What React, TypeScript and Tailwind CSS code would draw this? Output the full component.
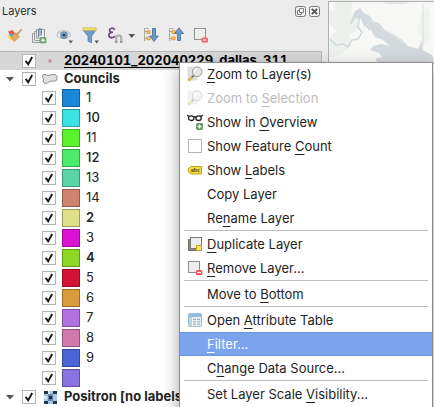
import React from "react";

type Legend = { label: string; fill: string; edge: string; weight?: string };

const councils: Legend[] = [
  { label: "1", fill: "bg-[#1b87d9]", edge: "border-[#145f98]" },
  { label: "10", fill: "bg-[#3be2e5]", edge: "border-[#2b9ea0]", weight: "font-medium" },
  { label: "11", fill: "bg-[#5bf32d]", edge: "border-[#40aa20]" },
  { label: "12", fill: "bg-[#4ceb6b]", edge: "border-[#35a44b]", weight: "font-medium" },
  { label: "13", fill: "bg-[#5bd4a8]", edge: "border-[#409476]" },
  { label: "14", fill: "bg-[#cf826e]", edge: "border-[#915b4d]" },
  { label: "2", fill: "bg-[#dfdf87]", edge: "border-[#9c9c5e]", weight: "font-semibold" },
  { label: "3", fill: "bg-[#d912d4]", edge: "border-[#980d94]" },
  { label: "4", fill: "bg-[#8dd824]", edge: "border-[#639719]", weight: "font-semibold" },
  { label: "5", fill: "bg-[#d31335]", edge: "border-[#940d25]" },
  { label: "6", fill: "bg-[#da9c3b]", edge: "border-[#996d29]" },
  { label: "7", fill: "bg-[#b370df]", edge: "border-[#7d4e9c]" },
  { label: "8", fill: "bg-[#d278ac]", edge: "border-[#935478]" },
  { label: "9", fill: "bg-[#4965d5]", edge: "border-[#334795]" },
  { label: "", fill: "bg-[#8a72e2]", edge: "border-[#61509e]" },
];

function Check({ label }: { label: string }) {
  return (
    <span className="grid size-3.5 shrink-0">
      <input
        type="checkbox"
        defaultChecked
        aria-label={label}
        className="peer col-start-1 row-start-1 size-3.5 appearance-none border border-[#b4b4b4] bg-white"
      />
      <svg viewBox="0 0 14 14" className="pointer-events-none invisible col-start-1 row-start-1 size-3.5 peer-checked:visible">
        <path d="M3.6 6.8 6.2 10.2 10.2 3" fill="none" stroke="#1c1c1c" strokeWidth="1.9" />
      </svg>
    </span>
  );
}

function Triangle() {
  return (
    <svg viewBox="0 0 8 5" className="h-[5px] w-2 shrink-0">
      <path d="M0 0H8L4 4.6Z" fill="#555" />
    </svg>
  );
}

function Magnifier() {
  return (
    <svg viewBox="0 0 16 16" className="size-4">
      <path d="M1 1h9v13H1z" fill="#e4e4df" stroke="#d0d0cc" strokeWidth=".6" />
      <path d="M6.8 9.2 1.6 14.8" stroke="#7d7d7d" strokeWidth="2.2" />
      <path d="M5 11.2 1.4 15" stroke="#edc43d" strokeWidth="1.8" />
      <circle cx="10.2" cy="5.8" r="4.8" fill="#e6e8e8" stroke="#9a9d9d" strokeWidth="1" />
      <path d="M7.4 5.6a3 3 0 0 1 3-2.6" fill="none" stroke="#fff" strokeWidth="1.2" />
    </svg>
  );
}

function Glasses() {
  return (
    <svg viewBox="0 0 16 16" className="size-4">
      <g fill="none" stroke="#222" strokeWidth="1.3">
        <ellipse cx="4.2" cy="4.2" rx="2.7" ry="2.3" />
        <ellipse cx="11.6" cy="4.2" rx="2.7" ry="2.3" />
        <path d="M6.500 3.200q1.400-1 2.800 0M0 1.400 2.200 2.400M15.800 1.400 13.600 2.400" />
      </g>
      <rect x="9.500" y="9.500" width="6" height="6" rx="1" fill="#5c9b65" stroke="#3f7e49" strokeWidth=".7" />
      <path d="M12.500 10.600v3.800M10.600 12.500h3.800" stroke="#fff" strokeWidth="1.4" />
    </svg>
  );
}

function LabelTag() {
  return (
    <svg viewBox="0 0 16 16" className="size-4">
      <path d="M4 4.500H14.500V12H4L1.300 9.800V6.700Z" fill="#f5dc3c" stroke="#c0a41d" />
      <text x="3.8" y="10.4" fontSize="6" fontWeight="700" fontFamily="Liberation Serif, serif" fill="#4c4320">abc</text>
    </svg>
  );
}

function Duplicate() {
  return (
    <svg viewBox="0 0 16 16" className="size-4">
      <path d="M3.5 3.5H1.5v11h10v-1" fill="#8e908a" stroke="#686a64" />
      <rect x="3.5" y="1.5" width="11" height="11" fill="#eeeeec" stroke="#777970" />
      <rect x="9.5" y="9.5" width="5" height="5" fill="#f5df77" stroke="#c9a313" />
    </svg>
  );
}

function Remove() {
  return (
    <svg viewBox="0 0 16 16" className="size-4">
      <rect x="1.5" y="1.5" width="11" height="11" fill="#eeeeec" stroke="#8c8e89" />
      <rect x="9" y="10" width="6.4" height="5" rx="1.6" fill="#ef4c4c" />
      <path d="M10.300 12.500h3.800" stroke="#fff" strokeWidth="1.3" />
    </svg>
  );
}

function TableIcon() {
  return (
    <svg viewBox="0 0 16 16" className="size-4">
      <rect x="1.5" y="1.5" width="13" height="13" rx="1" fill="#e2edf6" stroke="#9dbdd6" />
      <path d="M2 2h12v3H2z" fill="#8fbde0" />
      <path d="M2 5h3v9H2z" fill="#b9d5ea" />
      <path d="M6 7.500h3M10 7.500h3M6 9.800h3M10 9.800h3M6 12.100h3M10 12.100h3" stroke="#8fa9bd" />
      <path d="M5.500 5v9.400M9.500 5v9.400" stroke="#fff" strokeWidth=".7" />
    </svg>
  );
}

type ItemProps = {
  icon?: React.ReactNode;
  pre?: string;
  mnemonic?: string;
  post?: string;
  disabled?: boolean;
  active?: boolean;
};

function Mnemonic({ pre, mnemonic, post }: ItemProps) {
  return (
    <span className="pt-0.5 whitespace-pre">
      {pre}
      <span className="underline decoration-1 underline-offset-3 [text-decoration-skip-ink:none]">{mnemonic}</span>
      {post}
    </span>
  );
}

function Item({ icon, disabled, active, ...text }: ItemProps) {
  const tone = active
    ? "bg-[#7ca4ee] text-white border-y border-[#6f96dd]"
    : disabled
      ? "text-[#bcbcbc]"
      : "text-[#242424]";
  return (
    <button type="button" role="menuitem" disabled={disabled} className={`flex h-6 w-full items-center gap-1 pl-[7px] text-left ${tone}`}>
      <span className={`size-4 shrink-0 ${disabled ? "opacity-40" : ""}`}>{icon}</span>
      <Mnemonic {...text} />
    </button>
  );
}

function Separator() {
  return <div role="separator" className="mx-1 h-0.5 border-t border-[#bcbcbc]" />;
}

function ContextMenu() {
  return (
    <div
      role="menu"
      className="absolute top-[62px] left-[179px] w-[254px] border-x border-[#8b8b8b] bg-white pb-12 text-[13px] shadow-[inset_0_1px_0_#8b8b8b,0_6px_16px_rgba(0,0,0,0.35)]"
    >
      <Item icon={<Magnifier />} mnemonic="Z" post="oom to Layer(s)" />
      <Item icon={<Magnifier />} pre="Zoom to " mnemonic="S" post="election" disabled />
      <Item icon={<Glasses />} pre="Show in " mnemonic="O" post="verview" />
      <label className="flex h-6 items-center gap-1 pl-[7px] text-[#242424]">
        <span className="flex size-4 shrink-0 items-center justify-center">
          <input type="checkbox" className="size-3.5 appearance-none border border-[#b4b4b4] bg-white checked:bg-[#7ca4ee]" />
        </span>
        <Mnemonic pre="Show Feature " mnemonic="C" post="ount" />
      </label>
      <Item icon={<LabelTag />} pre="Show " mnemonic="L" post="abels" />
      <Item pre="Copy Layer" />
      <Item pre="Re" mnemonic="n" post="ame Layer" />
      <Separator />
      <Item icon={<Duplicate />} mnemonic="D" post="uplicate Layer" />
      <Item icon={<Remove />} mnemonic="R" post="emove Layer..." />
      <Separator />
      <Item pre="Move to " mnemonic="B" post="ottom" />
      <Separator />
      <Item icon={<TableIcon />} pre="Open " mnemonic="A" post="ttribute Table" />
      <Item mnemonic="F" post="ilter..." active />
      <Item pre="C" mnemonic="h" post="ange Data Source..." />
      <Separator />
      <Item pre="Set Layer Scale " mnemonic="V" post="isibility..." />
    </div>
  );
}

function Tool({ label, width, children }: { label: string; width: string; children: React.ReactNode }) {
  return (
    <button type="button" aria-label={label} className={`h-[18px] shrink-0 ${width}`}>
      {children}
    </button>
  );
}

function TreeGlyph() {
  return (
    <>
      <path d="M.5 2v13M.5 5.500h3M.5 12.500h3" fill="none" stroke="#a3a6a3" />
      <path d="M.5 2.500H5" stroke="#b4b6b4" />
      <path d="M3.200 4.800h2.600v2.600H3.200zM3.200 11h2.600v2.600H3.200z" fill="#fbe6bd" stroke="#ee9a34" strokeWidth="1.2" />
    </>
  );
}

function Toolbar() {
  return (
    <div className="flex h-[29px] items-center gap-[9px] pb-1 pl-1.5">
      <Tool label="Open layer styling panel" width="w-4">
        <svg viewBox="0 0 16 18" className="h-[18px] w-4">
          <path d="M2 5.500 6.500 4l3 4-5 2z" fill="#e85a4c" />
          <path d="M1 9.500 5 8l4 3.500L4.500 14z" fill="#f6db4c" />
          <path d="M3 8.200 6 7.400l2 2.600-3 1z" fill="#5c9ed8" />
          <path d="m6.500 9.500 3.500-3 3.500 4.500-5 4.500-3.500-3Z" fill="#deaa62" stroke="#c8934b" strokeWidth=".6" />
          <path d="M11 8.500 15 4" stroke="#c49a62" strokeWidth="1.8" strokeLinecap="round" />
        </svg>
      </Tool>
      <Tool label="Add group" width="w-4">
        <svg viewBox="0 0 16 18" className="h-[18px] w-4">
          <g fill="none" stroke="#999c99">
            <path d="M9.500 16.500h-8v-9h2M11.500 14.500h-8v-9h2" />
            <rect x="5.500" y="3.500" width="8" height="8.500" fill="#eceeee" />
          </g>
          <path d="M7.500 11V3.600a1.600 1.600 0 0 1 3 0V9M9 4v6" fill="none" stroke="#567a9c" strokeWidth=".9" />
          <rect x="9" y="11.500" width="6" height="5.500" rx="1" fill="#74ad7a" stroke="#558f5d" strokeWidth=".6" />
          <path d="M12 12.500v3.600M10.200 14.300h3.600" stroke="#fff" strokeWidth="1.2" />
        </svg>
      </Tool>
      <Tool label="Manage map themes" width="w-[17px]">
        <svg viewBox="0 0 17 18" className="h-[18px] w-[17px]">
          <path d="M.5 9.500Q7.500 2.500 15 9.500 7.500 15.500 .5 9.500Z" fill="#f8f8f8" stroke="#b0b0b0" strokeWidth=".9" />
          <path d="M1 7Q7.500 2 14.500 7" fill="none" stroke="#b8b8b8" strokeWidth=".9" />
          <circle cx="8" cy="9.2" r="3.5" fill="#7ba0c8" stroke="#5f82a6" strokeWidth=".7" />
          <circle cx="8" cy="9.2" r="1.4" fill="#2f4358" />
          <path d="M12.500 14.500h4.500l-2.250 3z" fill="#555" />
        </svg>
      </Tool>
      <Tool label="Filter legend" width="w-[17px]">
        <svg viewBox="0 0 17 18" className="h-[18px] w-[17px]">
          <path d="M1 4H14L9.600 10.200V17L6 15.200V10.200Z" fill="#6f9bc9" stroke="#5b83ad" strokeWidth=".8" />
          <path d="M.8 1.800h13.400v2.700H.8z" fill="#f5e25e" stroke="#bdb15c" strokeWidth=".6" />
          <path d="M12.500 14.500H17l-2.250 3z" fill="#555" />
        </svg>
      </Tool>
      <Tool label="Filter legend by expression" width="w-[27px]">
        <svg viewBox="0 0 27 18" className="h-[18px] w-[27px]">
          <path d="M6.800 3.800C5 1.200 1.500 2 1.500 4.300 1.500 6.200 3.500 6.300 5 6.300 2.800 6.300.8 7.200.8 9.200c0 3 4.800 3.200 6.200.600" fill="none" stroke="#6b4479" strokeWidth="1.6" />
          <path d="M8.200 16v-4.200q0-2.300 2.500-2.300t2.500 2.300V16" fill="none" stroke="#b3b5b3" strokeWidth="2.4" />
          <path d="M7 15h2.400v2H7zM12 15h2.400v2H12z" fill="#999b99" />
          <path d="M20.500 8H27l-3.250 4z" fill="#555" />
        </svg>
      </Tool>
      <Tool label="Expand all" width="w-4">
        <svg viewBox="0 0 16 18" className="h-[18px] w-4">
          <TreeGlyph />
          <path d="M8.500 2.500h3V10h2.800L10 15.500 5.700 10h2.800z" fill="#6d99c9" stroke="#4b749f" strokeWidth=".9" />
        </svg>
      </Tool>
      <Tool label="Collapse all" width="w-4">
        <svg viewBox="0 0 16 18" className="h-[18px] w-4">
          <TreeGlyph />
          <path d="M8.500 14.500h3V7.500h3L10 1.800 5.500 7.500h3z" fill="#6d99c9" stroke="#4b749f" strokeWidth=".9" />
        </svg>
      </Tool>
      <Tool label="Remove layer" width="w-4">
        <svg viewBox="0 0 16 18" className="h-[18px] w-4">
          <rect x=".5" y="2.500" width="11" height="11" fill="#eeeeec" stroke="#8f928f" />
          <rect x="7.500" y="11.500" width="6.500" height="5" rx="1.600" fill="#ef5c68" />
          <path d="M9 14h3.500" stroke="#fff" strokeWidth="1.3" />
        </svg>
      </Tool>
    </div>
  );
}

function TitleBar() {
  return (
    <div className="flex h-[22px] items-center gap-[3px] pr-2 pl-0.5">
      <h1 className="flex-1 text-[11px] text-[#2c2c2c]">Layers</h1>
      <button type="button" aria-label="Float panel" className="size-[11px]">
        <svg viewBox="0 0 11 11" className="size-[11px]">
          <rect x=".5" y=".5" width="10" height="10" rx="2" fill="#f1f1f1" stroke="#777" />
          <path d="M4.500 2.500h4v4h-4zM4.500 4.500h-2v4h4v-2" fill="none" stroke="#777" strokeWidth=".9" />
        </svg>
      </button>
      <button type="button" aria-label="Close panel" className="size-[11px]">
        <svg viewBox="0 0 11 11" className="size-[11px]">
          <rect x=".5" y=".5" width="10" height="10" rx="2" fill="#f1f1f1" stroke="#777" />
          <path d="m2.800 2.800 5.400 5.400m0-5.400L2.800 8.200" stroke="#555" strokeWidth="1.8" />
        </svg>
      </button>
    </div>
  );
}

function LayerTree() {
  return (
    <ul className="mr-1.5 flex-1 border-t border-r border-[#b5b5b5] bg-white text-[13px] text-[#242424]">
      <li className="flex h-[18px] items-center bg-[#d7d7d7] pl-[22px]">
        <Check label="20240101_202040229_dallas_311" />
        <svg viewBox="0 0 28 14" className="h-3.5 w-7 shrink-0">
          <circle cx="14" cy="7" r="1.8" fill="#b98b94" />
        </svg>
        <span className="font-bold text-black tabular-nums underline decoration-1 underline-offset-2 [text-decoration-skip-ink:none]">
          20240101_202040229_dallas_311
        </span>
      </li>
      <li>
        <div className="flex h-[18px] items-center pl-1.5">
          <Triangle />
          <span className="pl-2">
            <Check label="Councils" />
          </span>
          <svg viewBox="0 0 28 14" className="h-3.5 w-7 shrink-0">
            <path d="M6.500 4Q7 1.800 9 2.400q3 1.800 6 .5 3-1 5 .2 1.500 1 1 3.400-.2 2.500-2.500 2.700-2.500-.2-3.700 0Q13 9.500 11.500 11q-2 1-3.500 0Q6.500 9 7.500 7 6.300 5.500 6.500 4Z" fill="#dfdfdd" stroke="#8d8f8b" />
          </svg>
          <span className="font-bold">Councils</span>
        </div>
        <ul>
          {councils.map((c) => (
            <li key={c.fill} className="flex h-5 items-center gap-1.5 pl-[42px]">
              <Check label={`Council ${c.label}`} />
              <span className={`size-[18px] border ${c.fill} ${c.edge}`} />
              <span className={c.weight}>{c.label}</span>
            </li>
          ))}
        </ul>
      </li>
      <li className="flex h-[18px] items-center pl-1.5">
        <Triangle />
        <span className="pl-2">
          <Check label="Positron" />
        </span>
        <svg viewBox="0 0 28 14" className="h-3.5 w-7 shrink-0">
          <path d="M8 1h13v13H8z" fill="#a9c5e4" />
          <path d="M8 1h4v3H8zM17 1h4v3h-4zM8 11h4v3H8zM17 11h4v3h-4z" fill="#26364f" />
          <path d="M12 4h5v7h-5z" fill="#6785ab" />
          <path d="M13 6h3v3h-3z" fill="#1c2b42" />
          <path d="M12 1h2v3h-2zM8 6h3v3H8z" fill="#dbe7f3" />
        </svg>
        <span className="font-bold whitespace-nowrap">Positron [no labels]</span>
      </li>
    </ul>
  );
}

function MapCanvas() {
  return (
    <main className="mt-px min-w-0 flex-1 overflow-hidden border-t border-l border-[#b0b0b0] bg-[#f8f9f7]">
      <svg viewBox="0 0 106 62" className="h-[62px] w-[106px]">
        <path d="M6 0h18l-2 10 9 7-3 12-8 3 3 11-12 10-11 3V36l7-7-7-8V9l6-1Z" fill="#ecf1ec" />
        <path d="M92 12l7-8 3 8-3 12 3 12-8 7-2-10-4-5Z" fill="#eef3ee" />
        <path d="M54 0h26l-3 2H57Z" fill="#e2e5e6" />
        <path d="M26 9l5-3 4 5 6 3 3 5 6 2 5 6 9 5 9 6 6 6 10 3 4-9 1 10 9 5 3 9H50l-4-5 7-2-3-4-9-3 3-4 8-2 9 2-7-6-8-3-4-7-7-4-3-7-6-1-4 7-1-1Z" fill="#d3d9dc" />
        <path d="M94 2v42" stroke="#d9dfe1" fill="none" />
        <path d="M1 37l6 6 7-1 5 3 4-7 6-1 4-7-4-5 2-12 7 9 2 6" fill="none" stroke="#d0d9df" strokeWidth="1.5" />
        <path d="M34 27l8-9 10 9 9 4 13 10" fill="none" stroke="#e3e9e8" strokeWidth="1" />
      </svg>
    </main>
  );
}

export default function App() {
  return (
    <div className="relative flex h-screen overflow-hidden bg-[#ececec] font-[Inter,'Liberation_Sans',sans-serif]">
      <aside className="flex w-[328px] shrink-0 flex-col">
        <TitleBar />
        <Toolbar />
        <LayerTree />
      </aside>
      <MapCanvas />
      <ContextMenu />
    </div>
  );
}
